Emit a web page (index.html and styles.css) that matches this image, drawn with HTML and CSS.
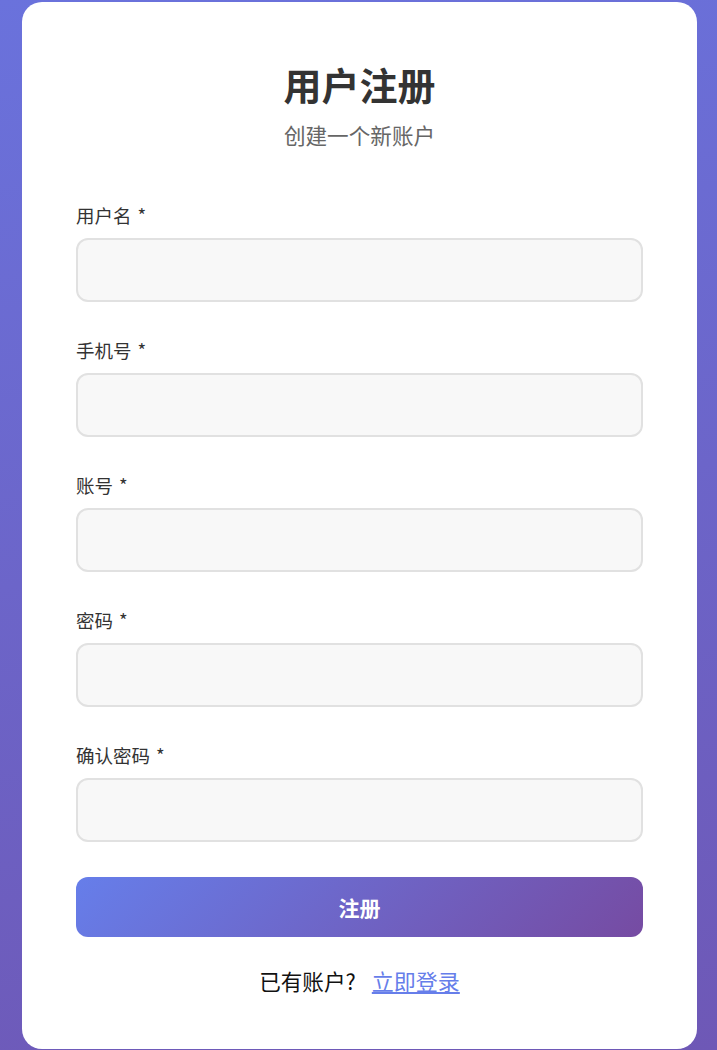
FILE: index.html
```html
<!DOCTYPE html>
<html lang="zh-CN">
<head>
<meta charset="UTF-8">
<title>用户注册</title>
<link rel="stylesheet" href="styles.css">
</head>
<body>
<div class="card">
  <h1 class="title">用户注册</h1>
  <p class="subtitle">创建一个新账户</p>
  <form class="form">
    <div class="field">
      <label class="label">用户名<span class="req">*</span></label>
      <input class="input" type="text">
    </div>
    <div class="field">
      <label class="label">手机号<span class="req">*</span></label>
      <input class="input" type="text">
    </div>
    <div class="field">
      <label class="label">账号<span class="req">*</span></label>
      <input class="input" type="text">
    </div>
    <div class="field">
      <label class="label">密码<span class="req">*</span></label>
      <input class="input" type="password">
    </div>
    <div class="field">
      <label class="label">确认密码<span class="req">*</span></label>
      <input class="input" type="password">
    </div>
    <button class="btn" type="button">注册</button>
  </form>
  <p class="footer">已有账户?<a class="link" href="#">立即登录</a></p>
</div>
</body>
</html>
```
FILE: styles.css
```css
* { box-sizing: border-box; }
html, body { margin: 0; padding: 0; }
body {
  min-height: 100vh;
  display: flex;
  justify-content: center;
  align-items: center;
  padding-left: 2px;
  background: linear-gradient(170deg, #6a72dc 0%, #6e58b6 100%);
  font-family: "Noto Sans CJK SC", "Noto Sans", sans-serif;
}
.card {
  width: 675px;
  background: #fff;
  border-radius: 20px;
  padding: 59px 54px 53px;
}
.title {
  margin: 0;
  text-align: center;
  font-size: 38px;
  line-height: 46px;
  font-weight: 700;
  color: #333;
}
.subtitle {
  margin: 13px 0 0;
  text-align: center;
  font-size: 21.6px;
  line-height: 30px;
  color: #666;
}
.form {
  margin-top: 53px;
  display: flex;
  flex-direction: column;
  gap: 36px;
}
.field {
  display: flex;
  flex-direction: column;
  gap: 11px;
}
.label {
  font-size: 18.5px;
  line-height: 24px;
  color: #333;
}
.req {
  margin-left: 6px;
}
.input {
  height: 64px;
  width: 100%;
  border: 2px solid #e1e1e1;
  border-radius: 12px;
  background: #f8f8f8;
  font-size: 18px;
  padding: 0 16px;
  outline: none;
}
.btn {
  margin-top: -1px;
  height: 60px;
  width: 100%;
  border: none;
  border-radius: 12px;
  background: linear-gradient(135deg, #667eea 0%, #764ba2 100%);
  color: #fff;
  font-family: inherit;
  font-size: 21px;
  font-weight: 700;
}
.footer {
  margin: 28px 0 0;
  text-align: center;
  font-size: 21.6px;
  line-height: 30px;
  color: #111;
}
.link {
  color: #667eea;
  text-decoration: underline;
  margin-left: 16px;
  font-size: 22px;
}
```
